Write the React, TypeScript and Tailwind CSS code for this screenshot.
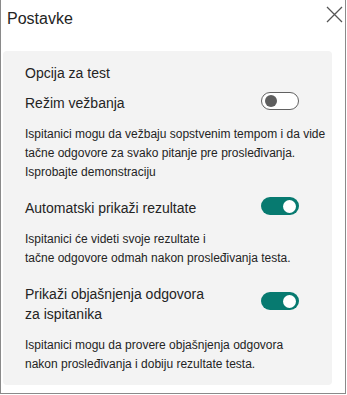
interface Setting {
  id: string
  label: string[]
  description: string[]
  on: boolean
}

const settings: Setting[] = [
  {
    id: 'practice',
    label: ['Režim vežbanja'],
    description: [
      'Ispitanici mogu da vežbaju sopstvenim tempom i da vide',
      'tačne odgovore za svako pitanje pre prosleđivanja.',
      'Isprobajte demonstraciju',
    ],
    on: false,
  },
  {
    id: 'results',
    label: ['Automatski prikaži rezultate'],
    description: [
      'Ispitanici će videti svoje rezultate i',
      'tačne odgovore odmah nakon prosleđivanja testa.',
    ],
    on: true,
  },
  {
    id: 'explain',
    label: ['Prikaži objašnjenja odgovora', 'za ispitanika'],
    description: [
      'Ispitanici mogu da provere objašnjenja odgovora',
      'nakon prosleđivanja i dobiju rezultate testa.',
    ],
    on: true,
  },
]

function Toggle({ on }: { on: boolean }) {
  return on ? (
    <div className="w-[38px] h-[18px] rounded-full bg-[#077a70] flex items-center justify-end pr-[3px] shrink-0">
      <div className="w-[13px] h-[13px] rounded-full bg-white" />
    </div>
  ) : (
    <div className="w-[38px] h-[18px] rounded-full border border-[#616161] bg-white flex items-center pl-[3px] shrink-0">
      <div className="w-[12px] h-[12px] rounded-full bg-[#5e5e5e]" />
    </div>
  )
}

export default function App() {
  return (
    <div
      className="w-[346px] h-[394px] bg-white border-l border-r border-b border-[#8a8a8a] text-[#242424] flex flex-col"
      style={{ fontFamily: '"Liberation Sans", Arial, sans-serif' }}
    >
      {/* Header */}
      <div className="flex items-start justify-between pl-[6px] pr-[2px] pt-[7px] h-[51px]">
        <span className="text-[16px] leading-[24px]">Postavke</span>
        <svg width="17" height="17" viewBox="0 0 17 17" className="mt-[-1px]">
          <path d="M1 1L16 16M16 1L1 16" stroke="#555" strokeWidth="1.3" fill="none" />
        </svg>
      </div>

      {/* Panel */}
      <div className="ml-[2px] w-[329px] h-[334px] bg-[#f3f3f3] rounded-[4px] pl-[22px] pr-[33px] pt-[12px]">
        <div className="text-[14px] leading-[20px]">Opcija za test</div>

        {settings.map((s, i) => (
          <div key={s.id} className={i === 0 ? 'mt-[10px]' : 'mt-[16px]'}>
            <div className="flex items-center justify-between">
              <div className="text-[14px] leading-[20px]">
                {s.label.map(l => (
                  <div key={l}>{l}</div>
                ))}
              </div>
              <div className={s.label.length > 1 ? '-translate-y-[3px]' : '-translate-y-[2px]'}>
                <Toggle on={s.on} />
              </div>
            </div>
            <div className="mt-[12px] text-[12px] leading-[19px] whitespace-nowrap">
              {s.description.map(d => (
                <div key={d}>{d}</div>
              ))}
            </div>
          </div>
        ))}
      </div>
    </div>
  )
}
